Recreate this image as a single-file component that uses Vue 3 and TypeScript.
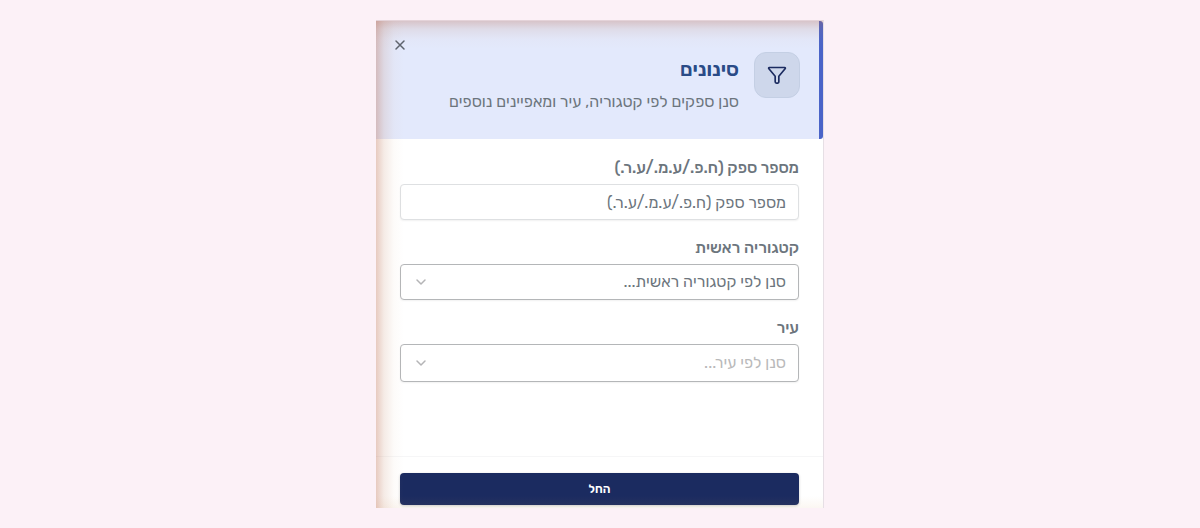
<script setup lang="ts">
import { ref } from 'vue'

const supplierNumber = ref('')
const category = ref('')
const city = ref('')

const categories: string[] = ['מזון', 'ציוד משרדי', 'שירותים']
const cities: string[] = ['ירושלים', 'תל אביב', 'חיפה']
</script>

<template>
  <main class="page" dir="rtl">
    <section class="panel" role="dialog" aria-labelledby="panel-title">
      <header class="head">
        <div class="badge">
          <svg viewBox="0 0 24 24" width="20" height="20" aria-hidden="true">
            <path d="M3 3h18a.9.9 0 0 1 .7 1.600L14.200 13.500v7a1.200 1.200 0 0 1-1.200 1.200h-1.600a1.600 1.600 0 0 1-1.600-1.600v-6.600L2.300 4.600A.9.9 0 0 1 3 3z" />
          </svg>
        </div>
        <div class="heading">
          <h2 id="panel-title">סינונים</h2>
          <p>סנן ספקים לפי קטגוריה, עיר ומאפיינים נוספים</p>
        </div>
        <button class="close" type="button" aria-label="סגור">
          <svg viewBox="0 0 16 16" width="16" height="16" aria-hidden="true">
            <path d="M4 4l8 8M12 4l-8 8" />
          </svg>
        </button>
      </header>

      <form id="filters" class="fields" @submit.prevent>
        <div class="field">
          <label for="supplier">מספר ספק (ח.פ./ע.מ./ע.ר.)</label>
          <input id="supplier" v-model="supplierNumber" type="text" placeholder="מספר ספק (ח.פ./ע.מ./ע.ר.)" />
        </div>
        <div class="field">
          <label for="category">קטגוריה ראשית</label>
          <div class="select">
            <select id="category" v-model="category">
              <option value="">סנן לפי קטגוריה ראשית...</option>
              <option v-for="item in categories" :key="item" :value="item">{{ item }}</option>
            </select>
            <svg viewBox="0 0 16 16" width="16" height="16" aria-hidden="true"><path d="M4 6l4 4 4-4" /></svg>
          </div>
        </div>
        <div class="field">
          <label for="city">עיר</label>
          <div class="select muted">
            <select id="city" v-model="city">
              <option value="">סנן לפי עיר...</option>
              <option v-for="item in cities" :key="item" :value="item">{{ item }}</option>
            </select>
            <svg viewBox="0 0 16 16" width="16" height="16" aria-hidden="true"><path d="M4 6l4 4 4-4" /></svg>
          </div>
        </div>
      </form>

      <footer class="foot">
        <button class="apply" type="submit" form="filters">החל</button>
      </footer>
    </section>
  </main>
</template>

<style>
body {
  background: #fcf1f7;
}
</style>

<style scoped>
.page,
.page * {
  box-sizing: border-box;
}
.page {
  display: flex;
  justify-content: center;
  min-height: 100vh;
  padding: 20px;
  font-family: Rubik, Roboto, sans-serif;
  font-size: 16px;
  line-height: 24px;
  color: #6c757d;
}
.panel {
  position: relative;
  display: flex;
  flex-direction: column;
  width: 100%;
  max-width: 448px;
  border-top: 1px solid #e4d3d9;
  border-right: 1px solid #e6dfe5;
  background: #fff;
}
/* warm glow along the leading edges */
.panel::after {
  content: "";
  position: absolute;
  inset: 0;
  pointer-events: none;
  background:
    linear-gradient(to right, rgba(185, 100, 70, 0.34), rgba(190, 120, 85, 0.15) 8px, rgba(205, 150, 110, 0.04) 18px, transparent 28px),
    linear-gradient(to bottom, rgba(185, 100, 70, 0.28), rgba(190, 120, 85, 0.12) 8px, rgba(205, 150, 110, 0.03) 18px, transparent 28px),
    linear-gradient(to top, rgba(205, 150, 90, 0.08), transparent 12px);
}
.head {
  position: relative;
  display: flex;
  gap: 15px;
  min-height: 118px;
  padding: 31px 19px 24px 24px;
  border-right: 4px solid #4a64c8;
  border-radius: 0 3px 3px 0;
  background: #e3e9fc;
}
.badge {
  display: grid;
  place-items: center;
  flex: none;
  width: 46px;
  height: 46px;
  border: 1px solid #c4cfe4;
  border-radius: 12px;
  background: #ced7eb;
}
svg {
  fill: none;
  stroke: currentColor;
  stroke-linecap: round;
  stroke-linejoin: round;
}
.badge svg {
  color: #1b2b60;
  stroke-width: 2;
}
h2 {
  margin: 3px 0 7px;
  font-size: 20px;
  line-height: 28px;
  font-weight: 600;
  color: #2a4b87;
}
p {
  margin: 0;
}
.close {
  position: absolute;
  left: 16px;
  top: 16px;
  display: flex;
  padding: 0;
  border: 0;
  background: none;
  color: #5a616c;
}
.close svg {
  stroke-width: 1.500;
}
.fields {
  display: flex;
  flex: 1;
  flex-direction: column;
  gap: 16px;
  padding: 17px 24px 16px;
}
.field {
  display: flex;
  flex-direction: column;
  gap: 4px;
}
label {
  font-weight: 500;
}
input,
select {
  display: block;
  width: 100%;
  height: 36px;
  margin: 0;
  padding: 0 12px;
  border: 1px solid #dee0e2;
  border-radius: 4px;
  background: #fff;
  box-shadow: 0 1px 2px rgba(0, 0, 0, 0.06);
  font: inherit;
  color: #6c757d;
}
input::placeholder {
  color: #6c757d;
  opacity: 1;
}
.select {
  position: relative;
}
select {
  appearance: none;
  border-color: #b4b6b8;
}
.select svg {
  position: absolute;
  left: 13px;
  top: 50%;
  transform: translateY(-50%);
  pointer-events: none;
  color: #b4b4b6;
  stroke-width: 1.500;
}
.muted select {
  height: 38px;
  color: #b9b9ba;
}
.foot {
  padding: 16px 24px 3px;
  border-top: 1px solid #f6f6f7;
}
.apply {
  display: block;
  width: 100%;
  height: 32px;
  border: 0;
  border-radius: 4px;
  background: #1b2b60;
  box-shadow: 0 1px 3px rgba(0, 0, 0, 0.2);
  font: 600 12px/16px Rubik, Roboto, sans-serif;
  color: #fff;
}
</style>
